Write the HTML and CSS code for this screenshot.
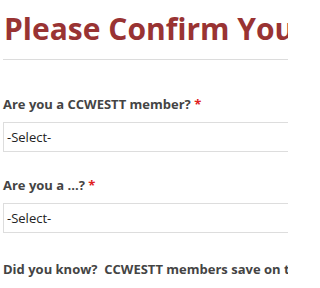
FILE: index.html
```html
<!DOCTYPE html>
<html>
<head>
<meta charset="utf-8">
<link rel="stylesheet" href="styles.css">
</head>
<body>
<div class="page">
  <h1 class="title">Please Confirm Your Membership</h1>
  <hr class="rule">
  <form class="form">
    <div class="field">
      <label class="label">Are you a CCWESTT member? <span class="req">*</span></label>
      <div class="select"><span>-Select-</span></div>
    </div>
    <div class="field">
      <label class="label">Are you a ...? <span class="req">*</span></label>
      <div class="select"><span>-Select-</span></div>
    </div>
    <p class="note">Did you know?&nbsp; CCWESTT members save on the conference fee.</p>
  </form>
</div>
</body>
</html>
```

FILE: styles.css
```css
html, body {
  margin: 0;
  padding: 0;
  background: #fff;
  overflow: hidden;
  width: 288px;
  height: 288px;
}
body {
  font-family: "Open Sans", "Noto Sans", sans-serif;
}
.page {
  padding: 0 0 0 3px;
  overflow: hidden;
  width: 285px;
  height: 288px;
}
.title {
  margin: 8px 0 0 1px;
  font-size: 30px;
  line-height: 42px;
  font-weight: 700;
  color: #993333;
  white-space: nowrap;
}
.rule {
  margin: 9px -20px 0 0;
  border: 0;
  border-top: 1px solid #dcdcdc;
  height: 0;
}
.form {
  display: flex;
  flex-direction: column;
  margin-right: -20px;
}
.field {
  display: flex;
  flex-direction: column;
}
.field:first-child {
  margin-top: 35px;
}
.field + .field {
  margin-top: 24px;
}
.label {
  font-size: 13px;
  line-height: 18px;
  font-weight: 700;
  color: #444;
  white-space: nowrap;
}
.req {
  color: #e02020;
}
.select {
  margin-top: 9px;
  height: 28px;
  border: 1px solid #ddd;
  display: flex;
  align-items: center;
  padding-left: 3px;
  font-size: 13px;
  color: #222;
}
.note {
  margin: 27px 0 0 0;
  font-size: 13px;
  line-height: 18px;
  font-weight: 700;
  color: #444;
  white-space: nowrap;
}
```
